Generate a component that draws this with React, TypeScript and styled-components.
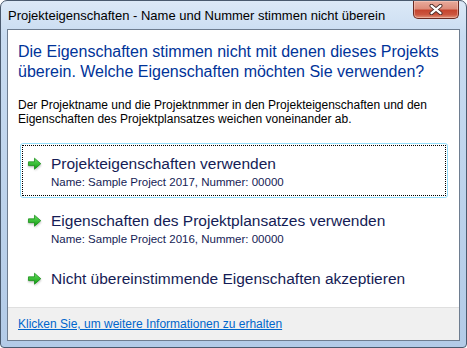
import React from "react";
import styled, { createGlobalStyle } from "styled-components";

const Global = createGlobalStyle`
  html, body { margin: 0; padding: 0; background: #ffffff; }
  body { font-family: "Liberation Sans", Arial, sans-serif; }
`;

const Window = styled.div`
  box-sizing: border-box;
  width: 467px;
  height: 348px;
  display: flex;
  flex-direction: column;
  border: 1px solid #4a5a6e;
  border-radius: 7px 7px 4px 4px;
  background: linear-gradient(180deg, #dce9f7 0%, #c9dcf1 10%, #bcd2eb 60%, #b3cbe7 100%);
  overflow: hidden;
`;

const TitleBar = styled.div`
  height: 28px;
  display: flex;
  align-items: flex-start;
  justify-content: space-between;
  padding: 0 7px 0 7px;
  flex-shrink: 0;
`;

const TitleText = styled.div`
  font-size: 13px;
  color: #000;
  margin-top: 7px;
  white-space: nowrap;
`;

const CloseButton = styled.div`
  box-sizing: border-box;
  width: 46px;
  height: 18px;
  border: 1px solid #6a2a22;
  border-top: none;
  border-radius: 0 0 5px 5px;
  background: linear-gradient(180deg, #e9ab9c 0%, #dd8d7b 45%, #c5452f 55%, #cc5640 80%, #e0937a 100%);
  box-shadow: inset 0 0 0 1px rgba(255, 215, 205, 0.45);
  display: flex;
  align-items: center;
  justify-content: center;
`;

const Client = styled.div`
  flex: 1;
  margin: 0 6px 6px 6px;
  border: 1px solid #6e7d90;
  background: #fff;
  display: flex;
  flex-direction: column;
`;

const Content = styled.div`
  flex: 1;
  padding: 12px 11px 0 10px;
  display: flex;
  flex-direction: column;
`;

const Heading = styled.div`
  font-size: 16px;
  line-height: 20px;
  color: #003399;
  white-space: nowrap;
`;

const Body = styled.div`
  font-size: 12px;
  line-height: 14px;
  color: #000;
  margin-top: 16px;
  white-space: nowrap;
`;

const Links = styled.div`
  display: flex;
  flex-direction: column;
  gap: 2px;
  margin-top: 17px;
  padding-left: 2px;
`;

const CommandLink = styled.div<{ $focused?: boolean; $single?: boolean }>`
  box-sizing: border-box;
  height: ${(p) => (p.$single ? "44px" : p.$focused ? "55px" : "56px")};
  border: 1px solid ${(p) => (p.$focused ? "#95defa" : "transparent")};
  border-radius: 3px;
  padding: 1px;
`;

const FocusRect = styled.div<{ $focused?: boolean }>`
  box-sizing: border-box;
  height: 100%;
  border: 1px dotted ${(p) => (p.$focused ? "#000" : "transparent")};
  display: flex;
  align-items: flex-start;
  padding: 7px 0 0 4px;
`;

const Arrow = styled.svg`
  width: 17px;
  height: 15px;
  margin-top: 4px;
  flex-shrink: 0;
`;

const LinkTexts = styled.div`
  display: flex;
  flex-direction: column;
  margin-left: 7px;
`;

const LinkTitle = styled.div`
  font-size: 15.5px;
  line-height: 21px;
  color: #151c55;
  white-space: nowrap;
`;

const LinkSub = styled.div`
  font-size: 11.5px;
  line-height: 16px;
  color: #151c55;
  white-space: nowrap;
`;

const Footer = styled.div`
  height: 32px;
  flex-shrink: 0;
  border-top: 1px solid #dfdfdf;
  background: #f0f0f0;
  display: flex;
  align-items: center;
  padding: 0 10px;
`;

const FooterLink = styled.a`
  font-size: 12px;
  color: #0066cc;
  text-decoration: underline;
  cursor: pointer;
`;

const GreenArrow = () => (
  <Arrow viewBox="0 0 17 15">
    <defs>
      <linearGradient id="ga" x1="0" y1="0" x2="0" y2="1">
        <stop offset="0" stopColor="#66e060" />
        <stop offset="1" stopColor="#109c10" />
      </linearGradient>
      <filter id="gs" x="-30%" y="-30%" width="160%" height="160%">
        <feGaussianBlur stdDeviation="1.1" />
      </filter>
    </defs>
    <path d="M1 5 H7.5 V1.5 L14 7 L7.5 12.5 V9 H1 Z" fill="#7a7a7a" opacity="0.55" filter="url(#gs)" transform="translate(0.3,1)" />
    <path d="M1.5 4.8 H7.5 V1.2 L13.8 6.7 L7.5 12.2 V8.6 H1.5 Z" fill="url(#ga)" stroke="#0b880b" strokeWidth="0.7" strokeLinejoin="round" />
  </Arrow>
);

const CloseX = () => (
  <svg width="14" height="11" viewBox="0 0 14 11">
    <path d="M2.5 1.8 L11.5 9.2 M11.5 1.8 L2.5 9.2" stroke="#4a2a26" strokeWidth="4" strokeLinecap="round" />
    <path d="M2.5 1.8 L11.5 9.2 M11.5 1.8 L2.5 9.2" stroke="#ffffff" strokeWidth="2.2" strokeLinecap="round" />
  </svg>
);

export default function App() {
  return (
    <>
      <Global />
      <Window>
        <TitleBar>
          <TitleText>Projekteigenschaften - Name und Nummer stimmen nicht überein</TitleText>
          <CloseButton>
            <CloseX />
          </CloseButton>
        </TitleBar>
        <Client>
          <Content>
            <Heading>
              Die Eigenschaften stimmen nicht mit denen dieses Projekts
              <br />
              überein. Welche Eigenschaften möchten Sie verwenden?
            </Heading>
            <Body>
              Der Projektname und die Projektnmmer in den Projekteigenschaften und den
              <br />
              Eigenschaften des Projektplansatzes weichen voneinander ab.
            </Body>
            <Links>
              <CommandLink $focused>
                <FocusRect $focused>
                  <GreenArrow />
                  <LinkTexts>
                    <LinkTitle>Projekteigenschaften verwenden</LinkTitle>
                    <LinkSub>Name: Sample Project 2017, Nummer: 00000</LinkSub>
                  </LinkTexts>
                </FocusRect>
              </CommandLink>
              <CommandLink>
                <FocusRect>
                  <GreenArrow />
                  <LinkTexts>
                    <LinkTitle>Eigenschaften des Projektplansatzes verwenden</LinkTitle>
                    <LinkSub>Name: Sample Project 2016, Nummer: 00000</LinkSub>
                  </LinkTexts>
                </FocusRect>
              </CommandLink>
              <CommandLink $single>
                <FocusRect>
                  <GreenArrow />
                  <LinkTexts>
                    <LinkTitle>Nicht übereinstimmende Eigenschaften akzeptieren</LinkTitle>
                  </LinkTexts>
                </FocusRect>
              </CommandLink>
            </Links>
          </Content>
          <Footer>
            <FooterLink>Klicken Sie, um weitere Informationen zu erhalten</FooterLink>
          </Footer>
        </Client>
      </Window>
    </>
  );
}
